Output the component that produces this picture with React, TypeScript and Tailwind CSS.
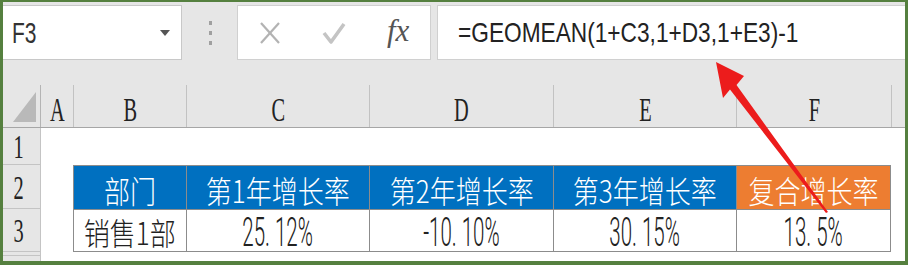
import React from "react";

const colLetter =
  "inline-block leading-none font-['Liberation_Serif',serif] text-[34px] text-[#222] scale-x-[0.6]";
const cjkWhite =
  "inline-block leading-none whitespace-nowrap font-['Noto_Sans_CJK_SC',sans-serif] font-light text-[31px] text-white scale-x-[0.84]";
const cjkDark =
  "inline-block leading-none whitespace-nowrap font-['Noto_Sans_CJK_SC',sans-serif] font-light text-[31px] text-[#222] scale-x-[0.84]";
const num =
  "inline-block leading-none whitespace-nowrap font-['Roboto',sans-serif] font-light text-[41px] text-[#222] scale-x-[0.5]";

function RowHdr({ label, h }: { label: string; h: string }) {
  return (
    <div className={`w-[38px] ${h} shrink-0 border-r border-b border-[#c4c4c4] bg-[#e6e6e6] flex items-center justify-center pr-[6px] pt-[2px]`}>
      <span className={colLetter}>{label}</span>
    </div>
  );
}

export default function App() {
  const headers = [
    { l: "A", w: "w-[33px]" },
    { l: "B", w: "w-[113px]" },
    { l: "C", w: "w-[183px]" },
    { l: "D", w: "w-[184px]" },
    { l: "E", w: "w-[183px]" },
    { l: "F", w: "w-[155px]" },
  ];
  const cellW = ["w-[113px]", "w-[183px]", "w-[184px]", "w-[183px]", "w-[155px]"];
  const row2 = ["部门", "第1年增长率", "第2年增长率", "第3年增长率", "复合增长率"];
  const row3 = ["25. 12%", "-10. 10%", "30. 15%", "13. 5%"];

  return (
    <div className="relative box-border w-[908px] h-[265px] overflow-hidden bg-[#e6e6e6] border-[#55803f] border-t-2 border-l-[3px] border-r-[3px] border-b-4 flex flex-col">
      {/* formula bar */}
      <div className="flex h-[58px] pt-[3px] shrink-0">
        <div className="w-[179px] bg-white border border-l-0 border-[#c8c8c8] flex items-center justify-between pl-[9px] pr-[11px]">
          <span className="inline-block leading-none origin-left font-['Liberation_Sans',sans-serif] text-[30px] text-[#333] scale-x-[0.7]">
            F3
          </span>
          <svg width="10" height="6" viewBox="0 0 10 6">
            <polygon points="0,0 10,0 5,6" fill="#555" />
          </svg>
        </div>
        <div className="w-[55px] flex flex-col items-center justify-center gap-[6px] pl-[2px]">
          <div className="w-[3px] h-[4px] bg-[#a0a0a0]" />
          <div className="w-[3px] h-[4px] bg-[#a0a0a0]" />
          <div className="w-[3px] h-[4px] bg-[#a0a0a0]" />
        </div>
        <div className="w-[194px] bg-white border border-[#d0d0d0] flex items-center justify-around">
          <svg width="22" height="24" viewBox="0 0 22 24">
            <line x1="2" y1="2" x2="20" y2="22" stroke="#b3b3b3" strokeWidth="2.2" />
            <line x1="20" y1="2" x2="2" y2="22" stroke="#b3b3b3" strokeWidth="2.2" />
          </svg>
          <svg width="24" height="24" viewBox="0 0 24 24">
            <polyline points="2,12 9,21 22,3" fill="none" stroke="#c4c4c4" strokeWidth="3.6" strokeLinejoin="round" />
          </svg>
          <span className="inline-block leading-none font-['Liberation_Serif',serif] italic text-[31px] text-[#555] pb-[4px]">
            fx
          </span>
        </div>
        <div className="w-[6px]" />
        <div className="flex-1 bg-white border border-r-0 border-[#d0d0d0] flex items-center pl-[20px]">
          <span className="inline-block leading-none origin-left whitespace-nowrap font-['Liberation_Sans',sans-serif] text-[28px] text-[#222] scale-x-[0.81]">
            =GEOMEAN(1+C3,1+D3,1+E3)-1
          </span>
        </div>
      </div>

      {/* column header row */}
      <div className="flex h-[43px] mt-[25px] shrink-0 border-b border-[#a6a6a6]">
        <div className="w-[38px] shrink-0 border-r border-[#b4b4b4] relative">
          <svg width="38" height="42" viewBox="0 0 38 42">
            <polygon points="33,7 33,37 10,37" fill="#b9b9b9" />
          </svg>
        </div>
        {headers.map((h) => (
          <div key={h.l} className={`${h.w} shrink-0 border-r border-[#c2c2c2] flex items-center justify-center pt-[7px]`}>
            <span className={colLetter}>{h.l}</span>
          </div>
        ))}
        <div className="flex-1" />
      </div>

      {/* row 1 */}
      <div className="flex h-[37px] shrink-0">
        <RowHdr label="1" h="h-[37px]" />
        <div className="flex-1 bg-white" />
      </div>

      {/* row 2 */}
      <div className="flex h-[44px] shrink-0">
        <RowHdr label="2" h="h-[44px]" />
        <div className="w-[32px] bg-white shrink-0" />
        {row2.map((t, i) => (
          <div
            key={t}
            className={`${cellW[i]} shrink-0 border-t border-l border-[#8c8c8c] ${i === 4 ? "border-r bg-[#ed7d31]" : "bg-[#0070c0]"} flex items-center justify-center pt-[3px] overflow-visible`}
          >
            <span className={cjkWhite}>{t}</span>
          </div>
        ))}
        <div className="flex-1 bg-white" />
      </div>

      {/* row 3 */}
      <div className="flex h-[43px] shrink-0">
        <RowHdr label="3" h="h-[43px]" />
        <div className="w-[32px] bg-white shrink-0" />
        <div className={`${cellW[0]} shrink-0 border-t border-l border-b border-[#8c8c8c] bg-white flex items-center justify-center pt-[2px]`}>
          <span className={cjkDark}>销售1部</span>
        </div>
        {row3.map((t, i) => (
          <div
            key={t}
            className={`${cellW[i + 1]} shrink-0 border-t border-l border-b border-[#8c8c8c] ${i === 3 ? "border-r" : ""} bg-white flex items-center justify-center pt-[3px]`}
          >
            <span className={num}>{t}</span>
          </div>
        ))}
        <div className="flex-1 bg-white" />
      </div>

      {/* row 4 (partial) */}
      <div className="flex flex-1">
        <div className="w-[38px] shrink-0 border-r border-[#c4c4c4] bg-[#e6e6e6] flex flex-col">
          <div className="h-[4px] border-b border-[#c4c4c4]" />
        </div>
        <div className="flex-1 bg-white" />
      </div>

      {/* red arrow overlay */}
      <svg
        className="absolute left-[-3px] top-[-2px] pointer-events-none"
        width="908"
        height="265"
        viewBox="0 0 908 265"
      >
        <polygon
          points="716,62 744,76 736.5,85 828,212 826,213 730,89.5 723,98"
          fill="#ec1c1c"
        />
      </svg>
    </div>
  );
}
